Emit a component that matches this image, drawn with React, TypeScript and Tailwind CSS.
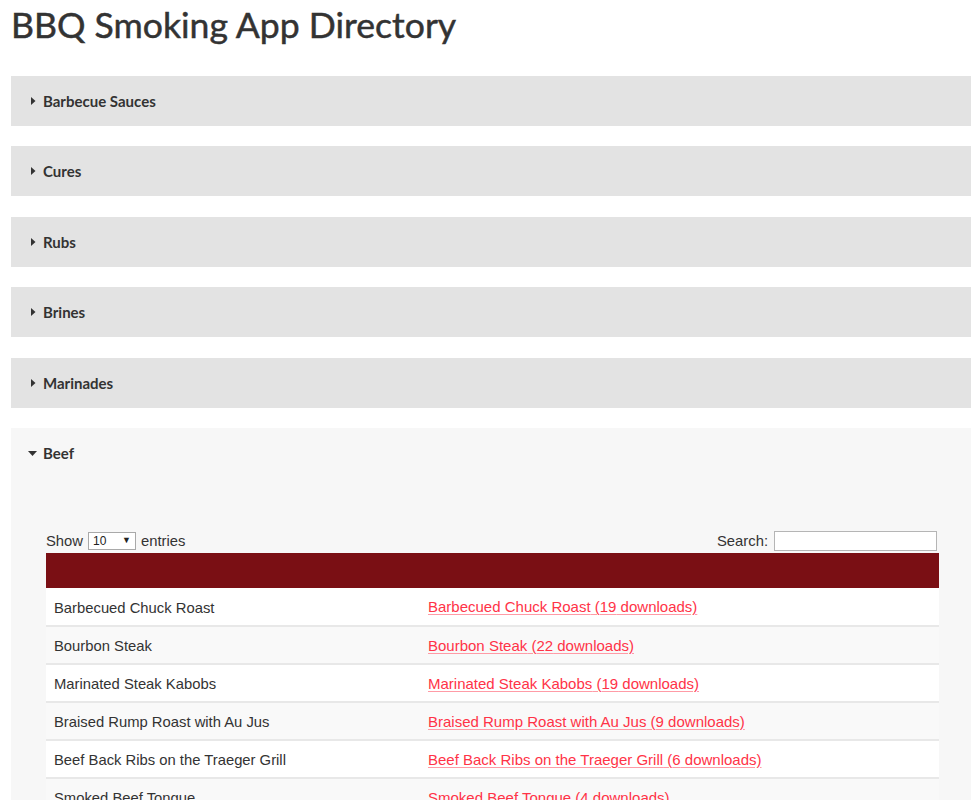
import React from 'react';

const closed = ['Barbecue Sauces', 'Cures', 'Rubs', 'Brines', 'Marinades'];

const beef = [
  { name: 'Barbecued Chuck Roast', downloads: 19 },
  { name: 'Bourbon Steak', downloads: 22 },
  { name: 'Marinated Steak Kabobs', downloads: 19 },
  { name: 'Braised Rump Roast with Au Jus', downloads: 9 },
  { name: 'Beef Back Ribs on the Traeger Grill', downloads: 6 },
  { name: 'Smoked Beef Tongue', downloads: 4 },
  { name: 'Smoked Brisket', downloads: 12 },
];

function CaretRight() {
  return (
    <svg width="5" height="8" viewBox="0 0 5 8" className="shrink-0">
      <path d="M0 0 L4.5 4 L0 8 Z" fill="#333" />
    </svg>
  );
}

function CaretDown() {
  return (
    <svg width="9" height="5" viewBox="0 0 9 5" className="shrink-0">
      <path d="M0 0 L9 0 L4.5 5 Z" fill="#333" />
    </svg>
  );
}

export default function App() {
  return (
    <div className="min-h-screen bg-white overflow-hidden">
      <h1
        className="pl-[11px] pt-[4px] text-[35.6px] leading-[1.2] text-[#333] mb-[29px] [-webkit-text-stroke:0.5px_#333]"
        style={{ fontFamily: 'Lato, "Open Sans", sans-serif' }}
      >
        BBQ Smoking App Directory
      </h1>

      <div className="ml-[11px] flex flex-col gap-[20.5px]" style={{ fontFamily: 'Lato, sans-serif' }}>
        {closed.map((label) => (
          <div key={label} className="h-[50px] bg-[#e3e3e3] flex items-center pl-[20px] gap-[7px]">
            <CaretRight />
            <span className="text-[15px] font-bold text-[#333] pt-[1px]">{label}</span>
          </div>
        ))}

        <div className="bg-[#f7f7f7]">
          <div className="h-[50px] flex items-center pl-[17px] gap-[6px]">
            <CaretDown />
            <span className="text-[15px] font-bold text-[#333] pt-[1px]">Beef</span>
          </div>

          <div
            className="pt-[53px] pl-[35px] pr-[32px] pb-8 text-[14.8px] text-[#333]"
            style={{ fontFamily: '"Liberation Sans", Arial, sans-serif' }}
          >
            <div className="flex items-end justify-between h-[20px]">
              <div className="flex items-center gap-[5px] h-full">
                <span>Show</span>
                <div className="w-[48px] h-[18px] border border-[#a9a9a9] bg-white flex items-center justify-between px-[4px] text-[12px] text-[#222]">
                  <span>10</span>
                  <span className="text-[9px]">▼</span>
                </div>
                <span>entries</span>
              </div>
              <div className="flex items-center gap-[6px] h-full pr-[2px]">
                <span>Search:</span>
                <input className="w-[163px] h-[20px] border border-[#b5b5b5] bg-white outline-none" />
              </div>
            </div>

            <table className="w-full mt-[2px] border-collapse">
              <thead>
                <tr className="bg-[#7a0f14] h-[35px]">
                  <th className="w-[374px]"></th>
                  <th></th>
                </tr>
              </thead>
              <tbody>
                {beef.map((row, i) => (
                  <tr
                    key={row.name}
                    className={`${i % 2 === 0 ? 'bg-white' : 'bg-[#f9f9f9]'} h-[38px] border-b-2 border-[#e8e8e8]`}
                  >
                    <td className="px-[8px] pt-[2px] text-left">{row.name}</td>
                    <td className="px-[8px] pt-[2px] text-left">
                      <a
                        href="#"
                        className="text-[15px] text-[#ff3347] underline decoration-[#ff9ba6] underline-offset-[2px]"
                      >
                        {row.name} ({row.downloads} downloads)
                      </a>
                    </td>
                  </tr>
                ))}
              </tbody>
            </table>
          </div>
        </div>
      </div>
    </div>
  );
}
